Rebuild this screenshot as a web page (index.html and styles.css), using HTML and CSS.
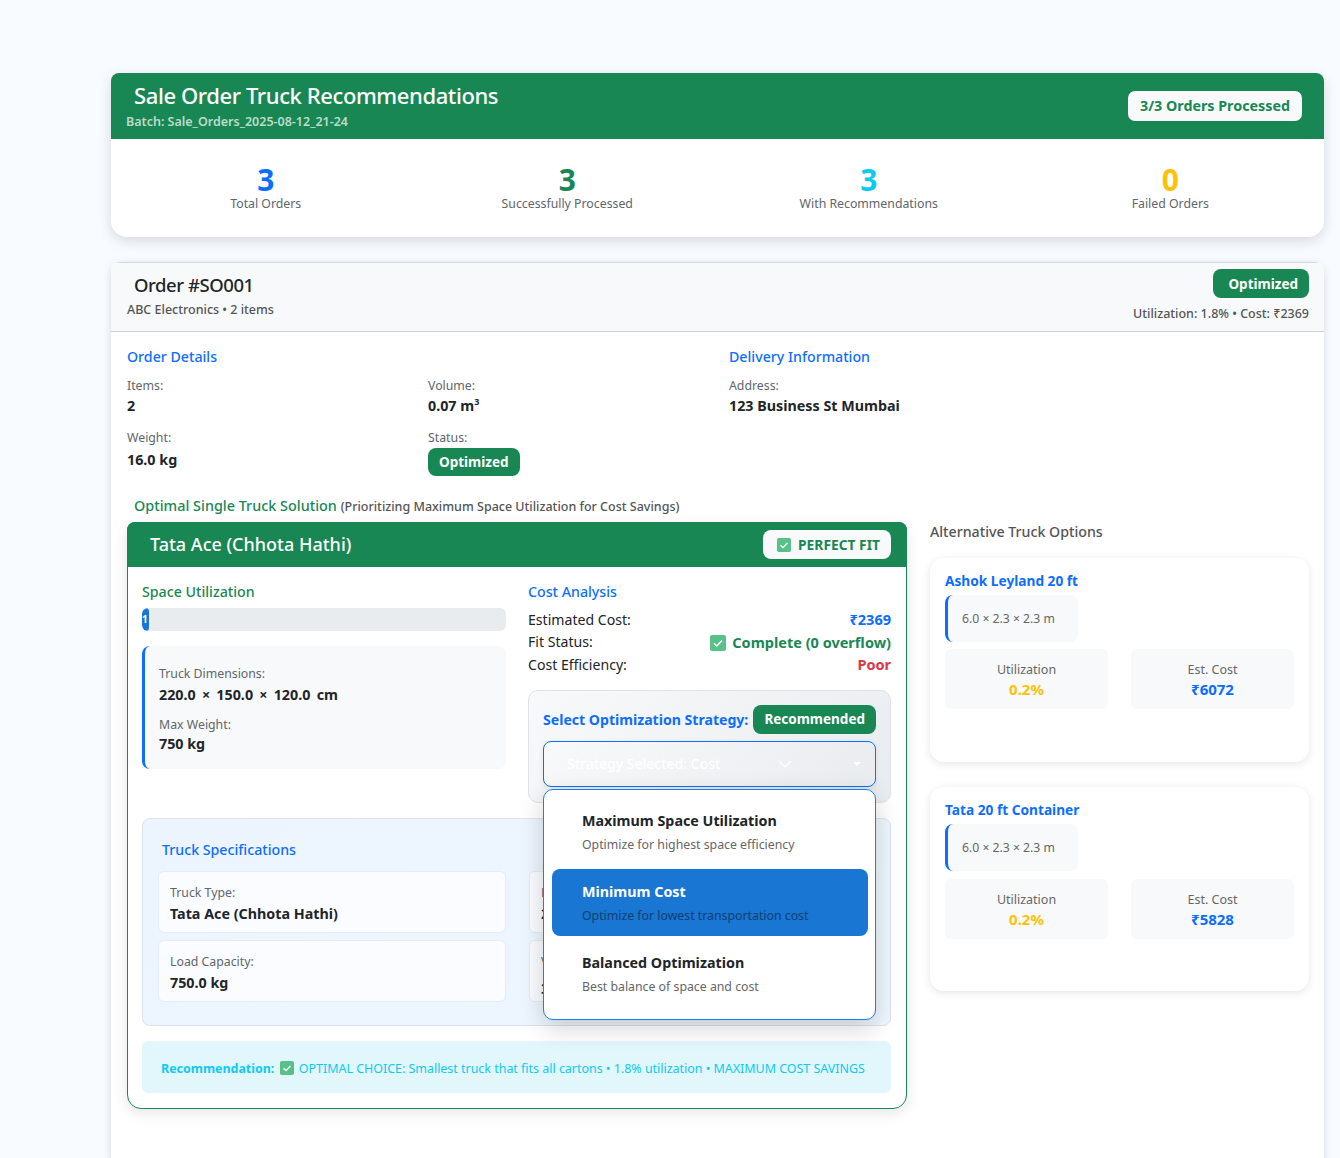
FILE: index.html
```html
<!DOCTYPE html>
<html lang="en">
<head>
    <meta charset="UTF-8">
    <meta name="viewport" content="width=device-width, initial-scale=1.0">
    <title>Sale Order Truck Recommendations</title>
    <link rel="stylesheet" href="styles.css">
</head>
<body>
    <svg class="svg-defs" width="0" height="0">
        <symbol id="check-box" viewBox="0 0 16 16">
            <rect width="16" height="16" rx="2" fill="#5ac08a"/>
            <path d="M4 8.2l2.8 2.8L12 5.6" fill="none" stroke="#fff" stroke-width="1.5"/>
        </symbol>
    </svg>

    <main class="page">
        <section class="batch-card">
            <header class="batch-header">
                <div>
                    <h1>Sale Order Truck Recommendations</h1>
                    <div class="batch-name">Batch: Sale_Orders_2025-08-12_21-24</div>
                </div>
                <div class="batch-count">3/3 Orders Processed</div>
            </header>
            <div class="batch-stats">
                <div class="stat"><div class="stat-num text-blue">3</div><div class="stat-label">Total Orders</div></div>
                <div class="stat"><div class="stat-num text-green">3</div><div class="stat-label">Successfully Processed</div></div>
                <div class="stat"><div class="stat-num text-cyan">3</div><div class="stat-label">With Recommendations</div></div>
                <div class="stat"><div class="stat-num text-amber">0</div><div class="stat-label">Failed Orders</div></div>
            </div>
        </section>

        <section class="order-card">
            <header class="order-header">
                <div>
                    <h2>Order #SO001</h2>
                    <div class="order-sub">ABC Electronics • 2 items</div>
                </div>
                <div class="order-summary">
                    <span class="badge">Optimized</span>
                    <div class="order-sub">Utilization: 1.8% • Cost: ₹2369</div>
                </div>
            </header>

            <div class="order-body">
                <div class="order-info">
                    <div>
                        <h3 class="heading-blue">Order Details</h3>
                        <div class="details-grid">
                            <div class="detail"><span class="label">Items:</span><strong>2</strong></div>
                            <div class="detail"><span class="label">Volume:</span><strong>0.07 m<sup>3</sup></strong></div>
                            <div class="detail"><span class="label">Weight:</span><strong>16.0 kg</strong></div>
                            <div class="detail"><span class="label">Status:</span><span class="badge badge-small">Optimized</span></div>
                        </div>
                    </div>
                    <div>
                        <h3 class="heading-blue">Delivery Information</h3>
                        <div class="detail"><span class="label">Address:</span><strong>123 Business St Mumbai</strong></div>
                    </div>
                </div>

                <div class="solution-row">
                    <div class="solution-main">
                        <h3 class="solution-title">Optimal Single Truck Solution <small>(Prioritizing Maximum Space Utilization for Cost Savings)</small></h3>
                        <article class="truck-card">
                            <header class="truck-header">
                                <h4>Tata Ace (Chhota Hathi)</h4>
                                <span class="fit-badge"><svg class="check"><use href="#check-box"/></svg>PERFECT FIT</span>
                            </header>
                            <div class="truck-body">
                                <div class="truck-columns">
                                    <div>
                                        <h3 class="heading-green">Space Utilization</h3>
                                        <div class="progress"><div class="progress-fill" style="width: 1.8%">1</div></div>
                                        <div class="truck-facts">
                                            <span class="label">Truck Dimensions:</span>
                                            <strong class="dims-value">220.0 × 150.0 × 120.0 cm</strong>
                                            <span class="label">Max Weight:</span>
                                            <strong class="weight-value">750 kg</strong>
                                        </div>
                                    </div>
                                    <div>
                                        <h3 class="heading-blue">Cost Analysis</h3>
                                        <div class="cost-row"><span>Estimated Cost:</span><strong class="text-blue">₹2369</strong></div>
                                        <div class="cost-row"><span>Fit Status:</span><strong class="text-green"><svg class="check check-large"><use href="#check-box"/></svg>Complete (0 overflow)</strong></div>
                                        <div class="cost-row"><span>Cost Efficiency:</span><strong class="text-red">Poor</strong></div>

                                        <div class="strategy">
                                            <div class="strategy-label">
                                                <span>Select Optimization Strategy:</span>
                                                <span class="badge badge-small">Recommended</span>
                                            </div>
                                            <div class="strategy-select">
                                                <span>Strategy Selected: Cost</span>
                                                <svg class="chevron" width="14" height="8" viewBox="0 0 14 8"><path d="M1 1l6 6 6-6" fill="none" stroke="#fff" stroke-width="1.2"/></svg>
                                                <span class="caret"></span>
                                            </div>
                                            <ul class="strategy-menu">
                                                <li>
                                                    <b>Maximum Space Utilization</b>
                                                    <span>Optimize for highest space efficiency</span>
                                                </li>
                                                <li class="active">
                                                    <b>Minimum Cost</b>
                                                    <span>Optimize for lowest transportation cost</span>
                                                </li>
                                                <li>
                                                    <b>Balanced Optimization</b>
                                                    <span>Best balance of space and cost</span>
                                                </li>
                                            </ul>
                                        </div>
                                    </div>
                                </div>

                                <div class="specs">
                                    <h3 class="heading-blue">Truck Specifications</h3>
                                    <div class="specs-grid">
                                        <div class="spec"><span class="label">Truck Type:</span><strong>Tata Ace (Chhota Hathi)</strong></div>
                                        <div class="spec"><span class="label">Dimensions:</span><strong>220.0 × 150.0 × 120.0 cm</strong></div>
                                        <div class="spec"><span class="label">Load Capacity:</span><strong>750.0 kg</strong></div>
                                        <div class="spec"><span class="label">Volume:</span><strong>3.96 m<sup>3</sup></strong></div>
                                    </div>
                                </div>

                                <div class="recommendation">
                                    <strong>Recommendation:</strong>
                                    <svg class="check"><use href="#check-box"/></svg>
                                    OPTIMAL CHOICE: Smallest truck that fits all cartons • 1.8% utilization • MAXIMUM COST SAVINGS
                                </div>
                            </div>
                        </article>
                    </div>

                    <aside class="alternatives">
                        <h3 class="alt-title">Alternative Truck Options</h3>
                        <article class="alt-card">
                            <h5>Ashok Leyland 20 ft</h5>
                            <div class="alt-dims">6.0 × 2.3 × 2.3 m</div>
                            <div class="alt-stats">
                                <div class="alt-stat"><span>Utilization</span><strong class="text-amber">0.2%</strong></div>
                                <div class="alt-stat"><span>Est. Cost</span><strong class="text-blue">₹6072</strong></div>
                            </div>
                        </article>
                        <article class="alt-card">
                            <h5>Tata 20 ft Container</h5>
                            <div class="alt-dims">6.0 × 2.3 × 2.3 m</div>
                            <div class="alt-stats">
                                <div class="alt-stat"><span>Utilization</span><strong class="text-amber">0.2%</strong></div>
                                <div class="alt-stat"><span>Est. Cost</span><strong class="text-blue">₹5828</strong></div>
                            </div>
                        </article>
                    </aside>
                </div>
            </div>
        </section>
    </main>
</body>
</html>
```

FILE: styles.css
```css
* {
    box-sizing: border-box;
}

html, body {
    height: 1158px;
    overflow: hidden;
}

body {
    margin: 0;
    font-family: "Noto Sans", "Open Sans", sans-serif;
    font-size: 14px;
    color: #212529;
    background-color: #f8fbff;
}

h1, h2, h3, h4, h5, ul {
    margin: 0;
    padding: 0;
}

.svg-defs {
    position: absolute;
}

.page {
    padding: 73px 16px 0 111px;
}

.text-blue { color: #0d6efd; }
.text-green { color: #198754; }
.text-cyan { color: #0dcaf0; }
.text-amber { color: #ffc107; }
.text-red { color: #dc3545; }

.badge {
    display: inline-flex;
    align-items: center;
    justify-content: center;
    height: 29px;
    padding: 0 11px 0 15px;
    background-color: #198754;
    border-radius: 8px;
    color: #fff;
    font-size: 13.5px;
    font-weight: 700;
}

.badge-small {
    padding: 0 11px;
}

.check {
    width: 14px;
    height: 14px;
    vertical-align: -2px;
}

.check-large {
    width: 16px;
    height: 16px;
    margin-right: 6px;
    vertical-align: -3px;
}

/* batch summary */
.batch-card {
    height: 164px;
    background-color: #fff;
    border-radius: 8px 8px 16px 16px;
    box-shadow: 0 4px 14px rgba(0, 0, 0, 0.14);
    overflow: hidden;
}

.batch-header {
    display: flex;
    justify-content: space-between;
    align-items: center;
    height: 66px;
    padding: 0 22px 3px 15px;
    background-color: #198754;
    color: #fff;
}

.batch-header h1 {
    margin-left: 8px;
    font-size: 22px;
    font-weight: 500;
    letter-spacing: -0.4px;
    line-height: 30px;
}

.batch-name {
    margin-top: 4px;
    font-size: 12.5px;
    font-weight: 600;
    line-height: 16px;
    color: #b9dcc9;
}

.batch-count {
    display: flex;
    align-items: center;
    height: 30px;
    margin-top: 3px;
    padding: 0 12px 2px;
    background-color: #f8f9fa;
    border-radius: 7px;
    color: #198754;
    font-size: 14.3px;
    font-weight: 700;
}

.batch-stats {
    display: grid;
    grid-template-columns: repeat(4, 1fr);
    padding: 25px 3px 0 4px;
    text-align: center;
}

.stat-num {
    font-size: 30px;
    font-weight: 700;
    line-height: 32px;
}

.stat-label {
    font-size: 12.3px;
    line-height: 16px;
    color: #60666c;
}

/* order card */
.order-card {
    height: 900px;
    margin-top: 25px;
    background-color: #fff;
    border-top: 1px solid #d5d8da;
    border-radius: 10px 10px 0 0;
    box-shadow: 0 2px 8px rgba(0, 0, 0, 0.14);
}

.order-header {
    display: flex;
    justify-content: space-between;
    height: 69px;
    padding: 6px 15px 0 16px;
    background-color: #f8f9fa;
    border-bottom: 1px solid #cfd2d4;
}

.order-header h2 {
    margin: 2px 0 0 7px;
    font-size: 18.5px;
    font-weight: 500;
    letter-spacing: -0.45px;
    line-height: 28px;
}

.order-sub {
    margin-top: 3px;
    font-size: 12.5px;
    font-weight: 500;
    line-height: 16px;
    color: #555;
}

.order-summary {
    text-align: right;
}

.order-summary .order-sub {
    margin-top: 8px;
}

.order-body {
    padding: 14px 15px 0 16px;
}

.heading-blue,
.heading-green {
    height: 20px;
    padding-top: 1px;
    font-size: 14.2px;
    font-weight: 500;
    line-height: 20px;
    color: #0d6efd;
}

.heading-green {
    color: #198754;
}

.order-info {
    display: grid;
    grid-template-columns: 602px 1fr;
}

.details-grid {
    display: grid;
    grid-template-columns: 301px 1fr;
    row-gap: 13px;
    margin-top: 11px;
}

.detail {
    display: flex;
    flex-direction: column;
    align-items: flex-start;
    margin-top: 11px;
}

.details-grid .detail {
    margin-top: 0;
}

.label {
    font-size: 12.3px;
    line-height: 17px;
    color: #60666c;
}

strong {
    font-weight: 700;
}

.detail strong {
    margin-top: 2px;
    font-size: 14.3px;
    line-height: 20px;
}

.details-grid .detail:nth-child(3) strong {
    margin-top: 4px;
}

.detail .badge {
    height: 28px;
    margin-top: 2px;
}

.detail sup {
    font-size: 9px;
    line-height: 0;
}

/* solution */
.solution-row {
    display: grid;
    grid-template-columns: 780px 379px;
    column-gap: 23px;
    margin-top: 19px;
}

.solution-title {
    height: 20px;
    margin-left: 7px;
    padding-top: 1px;
    font-size: 14.4px;
    font-weight: 500;
    line-height: 20px;
    color: #198754;
}

.solution-title small {
    font-size: 12.5px;
    color: #555;
}

.truck-card {
    height: 587px;
    margin-top: 7px;
    background-color: #fff;
    border: 1px solid #198754;
    border-radius: 8px 8px 14px 14px;
    box-shadow: 0 4px 14px rgba(0, 0, 0, 0.1);
}

.truck-header {
    display: flex;
    justify-content: space-between;
    align-items: center;
    height: 45px;
    margin: -1px -1px 0;
    padding: 0 16px 0 23px;
    background-color: #198754;
    border-radius: 8px 8px 0 0;
}

.truck-header h4 {
    margin-bottom: 2px;
    font-size: 18px;
    font-weight: 500;
    color: #fff;
}

.fit-badge {
    display: flex;
    align-items: center;
    gap: 7px;
    height: 29px;
    padding: 0 11px 0 14px;
    background-color: #f8f9fa;
    border-radius: 8px;
    color: #198754;
    font-size: 13.8px;
    font-weight: 700;
}

.truck-body {
    padding: 14px 15px 0 14px;
}

.truck-columns {
    display: grid;
    grid-template-columns: 364px 363px;
    column-gap: 22px;
    height: 237px;
}

.progress {
    height: 23px;
    margin-top: 7px;
    background-color: #e9ecef;
    border-radius: 6px;
    overflow: hidden;
}

.progress-fill {
    height: 100%;
    background-color: #1976d2;
    border-radius: 6px;
    color: #fff;
    font-size: 10px;
    font-weight: 700;
    line-height: 23px;
    overflow: hidden;
}

.truck-facts {
    display: flex;
    flex-direction: column;
    height: 123px;
    margin-top: 15px;
    padding: 19px 14px 0;
    background-color: #f8f9fa;
    border-left: 3px solid #0d6efd;
    border-radius: 8px;
}

.truck-facts strong {
    margin: 3px 0 11px;
    font-size: 14.3px;
    line-height: 20px;
}

.truck-facts .dims-value {
    word-spacing: 2.5px;
}

.truck-facts .weight-value {
    margin: 1px 0 0;
}

.cost-row {
    display: flex;
    justify-content: space-between;
    align-items: center;
    height: 22.5px;
    font-size: 14.1px;
}

.cost-row strong {
    font-size: 14.5px;
}

.cost-row:first-of-type {
    margin-top: 7px;
}

/* strategy picker */
.strategy {
    position: relative;
    height: 113px;
    margin-top: 14px;
    padding: 14px 14px 0;
    background: linear-gradient(135deg, #f8f9fa, #e9ecef);
    border: 1px solid #dee2e6;
    border-radius: 10px;
}

.strategy-label {
    display: flex;
    justify-content: space-between;
    align-items: center;
    color: #0d6efd;
    font-size: 14.1px;
    font-weight: 700;
    white-space: nowrap;
}

.strategy-select {
    display: flex;
    align-items: center;
    height: 46px;
    margin-top: 7px;
    padding: 0 14px 0 23px;
    background: linear-gradient(135deg, #f8f9fa, #e9ecef);
    border: 1px solid #0d6efd;
    border-radius: 8px;
    box-shadow: 0 2px 6px rgba(0, 0, 0, 0.08);
    color: #fff;
    font-size: 14px;
    font-weight: 500;
}

.chevron {
    margin-left: 58px;
}

.caret {
    margin-left: auto;
    border: 4px solid transparent;
    border-top-color: #fff;
    border-bottom: 0;
}

.strategy-menu {
    position: absolute;
    top: 98px;
    left: 14px;
    right: 14px;
    z-index: 10;
    height: 231px;
    padding: 8px 7px 8px 8px;
    list-style: none;
    background-color: #fff;
    border: 1px solid #1a7fe8;
    border-radius: 10px;
    box-shadow: 0 8px 24px rgba(0, 0, 0, 0.18);
}

.strategy-menu li {
    height: 67px;
    margin-bottom: 4px;
    padding: 13px 30px;
    border-radius: 8px;
}

.strategy-menu b {
    display: block;
    font-size: 14.3px;
    line-height: 20px;
    color: #212529;
}

.strategy-menu span {
    display: block;
    margin-top: 5px;
    font-size: 12.3px;
    line-height: 18px;
    color: #666;
}

.strategy-menu .active {
    background-color: #1976d2;
}

.strategy-menu .active b {
    color: #fff;
}

.strategy-menu .active span {
    color: #0d3f73;
}

/* truck specs */
.specs {
    height: 208px;
    padding: 20px 15px 0;
    background: linear-gradient(135deg, #ecf5fe, #eef6fe);
    border: 1px solid #dde3ea;
    border-radius: 8px;
}

.specs .heading-blue {
    margin-left: 4px;
}

.specs-grid {
    display: grid;
    grid-template-columns: 348px 346px;
    column-gap: 23px;
    row-gap: 7px;
    margin-top: 12px;
}

.spec {
    display: flex;
    flex-direction: column;
    height: 62px;
    padding: 12px 11px 0;
    background-color: #fafcff;
    border: 1px solid #e4edf6;
    border-radius: 6px;
}

.spec strong {
    margin-top: 3px;
    font-size: 14.3px;
    line-height: 20px;
}

.recommendation {
    height: 52px;
    margin-top: 15px;
    padding-left: 19px;
    background-color: #e2f7fb;
    border-radius: 6px;
    color: #0dcaf0;
    font-size: 12.45px;
    line-height: 56px;
    white-space: nowrap;
}

.recommendation .check {
    margin: 0 2px;
}

/* alternatives */
.alt-title {
    height: 22px;
    margin-top: 25px;
    padding-top: 1px;
    font-size: 14.2px;
    font-weight: 500;
    line-height: 22px;
    color: #555;
}

.alt-card {
    height: 204px;
    margin-top: 16px;
    padding: 14px 15px 0;
    background-color: #fff;
    border-radius: 14px;
    box-shadow: 0 2px 8px rgba(0, 0, 0, 0.1);
}

.alt-card + .alt-card {
    margin-top: 25px;
}

.alt-card + .alt-card .alt-stats {
    margin-top: 8px;
}

.alt-card h5 {
    font-size: 13.7px;
    font-weight: 700;
    line-height: 18px;
    color: #0d6efd;
}

.alt-dims {
    display: inline-block;
    width: 133px;
    height: 47px;
    margin-top: 5px;
    padding-left: 14px;
    background-color: #f8f9fa;
    border-left: 3px solid #0d6efd;
    border-radius: 8px;
    color: #666;
    font-size: 12.2px;
    line-height: 47px;
}

.alt-stats {
    display: grid;
    grid-template-columns: 163px 163px;
    column-gap: 23px;
    margin-top: 7px;
}

.alt-stat {
    display: flex;
    flex-direction: column;
    align-items: center;
    height: 60px;
    padding-top: 12px;
    background-color: #f8f9fa;
    border-radius: 6px;
}

.alt-stat span {
    font-size: 12.5px;
    line-height: 17px;
    color: #666;
}

.alt-stat strong {
    font-size: 15px;
    line-height: 22px;
}
```
